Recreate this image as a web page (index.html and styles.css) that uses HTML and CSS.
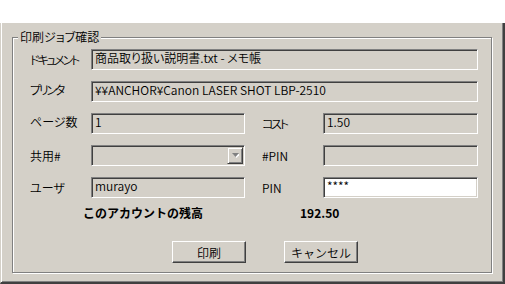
FILE: index.html
```html
<!DOCTYPE html>
<html>
<head>
  <title>印刷ジョブ確認</title>
  <link rel="stylesheet" href="styles.css">
</head>
<body>
  <div class="window">
    <fieldset class="group">
      <legend class="group-title">印刷ジョブ確認</legend>
      <div class="form">
        <span class="label tight">ドキュメント</span>
        <div class="field wide">商品取り扱い説明書.txt - メモ帳</div>

        <span class="label tight">プリンタ</span>
        <div class="field wide">¥¥ANCHOR¥Canon LASER SHOT LBP-2510</div>

        <span class="label">ページ数</span>
        <div class="field">1</div>
        <span class="label right tight">コスト</span>
        <div class="field">1.50</div>

        <span class="label">共用#</span>
        <div class="field combo">
          <span class="combo-btn">
            <svg width="7" height="5" viewBox="0 0 7 5">
              <polygon points="1,1 8,1 4.5,5" fill="#fff"/>
              <polygon points="0,0 7,0 3.5,4" fill="#808080"/>
            </svg>
          </span>
        </div>
        <span class="label right">#PIN</span>
        <div class="field"></div>

        <span class="label">ユーザ</span>
        <div class="field">murayo</div>
        <span class="label right">PIN</span>
        <div class="field editable">****</div>
      </div>

      <div class="balance">
        <span>このアカウントの残高</span>
        <span>192.50</span>
      </div>

      <div class="actions">
        <button class="btn">印刷</button>
        <button class="btn">キャンセル</button>
      </div>
    </fieldset>
  </div>
</body>
</html>
```

FILE: styles.css
```css
body {
  margin: 0;
  padding-top: 23px;
  background-color: #fff;
  font-family: "Noto Sans CJK JP", "Liberation Sans", sans-serif;
  font-size: 12px;
  font-weight: 350;
  color: #000;
  font-feature-settings: "palt";
}

.window {
  box-sizing: border-box;
  width: 505px;
  height: 261px;
  padding: 7px 0 0 11px;
  background-color: #d4d0c8;
  border-left: 1px solid #d4d0c8;
  border-right: 2px solid #404040;
  border-bottom: 2px solid #404040;
  box-shadow: inset 1px 0 0 #fff, inset -1px -1px 0 #808080;
}

.group {
  box-sizing: border-box;
  width: 480px;
  margin: 0;
  padding: 0;
  border: 1px solid #808080;
  box-shadow: inset 1px 1px 0 #fff, 1px 1px 0 #fff;
}

.group-title {
  margin-left: 5px;
  padding: 0 2px;
  line-height: 14px;
  background-color: #d4d0c8;
}

.form {
  display: grid;
  grid-template-columns: 61px 154px 17px 61px 155px;
  grid-auto-rows: 21px;
  row-gap: 11px;
  padding: 5px 0 0 17px;
}

.label {
  grid-column: 1;
  line-height: 21px;
  white-space: nowrap;
}

.label.right {
  grid-column: 4;
}

.label.tight {
  letter-spacing: -2.2px;
}

.field {
  box-sizing: border-box;
  position: relative;
  height: 21px;
  padding: 2px 3px 0;
  line-height: 12px;
  white-space: nowrap;
  overflow: hidden;
  background-color: #d4d0c8;
  border: 1px solid;
  border-color: #808080 #fff #fff #808080;
  box-shadow: inset 1px 1px 0 #404040, inset -1px -1px 0 #d4d0c8;
}

.field.wide {
  grid-column: 2 / 6;
}

.form .field.wide + .label {
  margin-top: -2px;
}

.field.editable {
  background-color: #fff;
}

.combo {
  display: flex;
  justify-content: flex-end;
  padding: 1px;
}

.combo-btn {
  box-sizing: border-box;
  display: flex;
  align-items: center;
  justify-content: center;
  width: 16px;
  height: 17px;
  border: 1px solid;
  border-color: #d4d0c8 #404040 #404040 #d4d0c8;
  box-shadow: inset 1px 1px 0 #fff, inset -1px -1px 0 #808080;
}

.balance {
  display: grid;
  grid-template-columns: 217px auto;
  margin: 6px 0 0 70px;
  line-height: 17px;
  font-weight: bold;
  font-feature-settings: normal;
}

.actions {
  display: flex;
  gap: 38px;
  margin: 20px 0 0 159px;
  padding-bottom: 9px;
}

.btn {
  box-sizing: border-box;
  width: 74px;
  height: 22px;
  padding: 0;
  font-family: inherit;
  font-size: 12px;
  font-weight: 350;
  color: #000;
  background-color: #d4d0c8;
  border: 1px solid;
  border-color: #fff #404040 #404040 #fff;
  box-shadow: inset -1px -1px 0 #808080;
}
```
